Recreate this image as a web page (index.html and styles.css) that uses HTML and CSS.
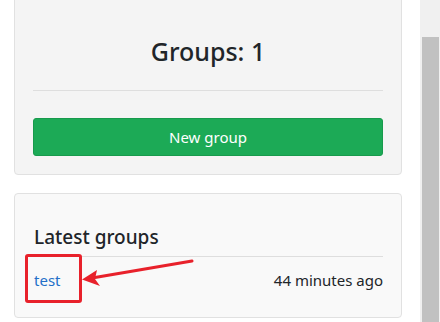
FILE: index.html
```html
<!DOCTYPE html>
<html>
<head>
<meta charset="utf-8">
<link rel="stylesheet" href="styles.css">
</head>
<body>
<div class="page">
  <main class="main">
    <section class="card card-stats">
      <h3 class="stat-title">Groups: 1</h3>
      <hr class="rule">
      <button class="btn-new">New group</button>
    </section>
    <section class="card card-latest">
      <h5 class="latest-title">Latest groups</h5>
      <div class="row">
        <a class="group-link" href="#">test</a>
        <span class="ago">44 minutes ago</span>
      </div>
      <div class="highlight"></div>
      <svg class="arrow" width="120" height="30" viewBox="0 0 120 30">
        <line x1="112" y1="4" x2="12" y2="21" stroke="#e8212b" stroke-width="3" stroke-linecap="round"/>
        <path d="M2 22.5 L17 13 L15 22 L20 29 Z" fill="#e8212b"/>
      </svg>
    </section>
  </main>
  <div class="scrollbar"><div class="thumb"></div></div>
</div>
</body>
</html>
```
FILE: styles.css
```css
* { box-sizing: border-box; }
html, body { margin: 0; padding: 0; background: #fff; }
body {
  font-family: "Noto Sans", "Open Sans", sans-serif;
  color: #212529;
  width: 440px;
  height: 322px;
  overflow: hidden;
}
.page { display: flex; height: 322px; }
.main { width: 420px; padding-left: 14px; }
.scrollbar { width: 20px; background: #f0f0f0; padding: 37px 1px 0 2px; }
.thumb { background: #c1c1c1; height: 300px; }

.card {
  width: 388px;
  border: 1px solid #e1e1e1;
  border-radius: 4px;
  padding: 0 18px;
  position: relative;
}
.card-stats {
  background: #f4f4f4;
  margin-top: -10px;
  padding-top: 47px;
  padding-bottom: 18px;
  height: 185px;
}
.stat-title {
  margin: 0;
  text-align: center;
  font-size: 25px;
  font-weight: 500;
  line-height: 26px;
}
.rule {
  border: 0;
  border-top: 1px solid #dedede;
  margin: 26px 0 0;
}
.btn-new {
  display: block;
  width: 100%;
  height: 38px;
  margin-top: 27px;
  background: #1caa56;
  border: 1px solid #179a4c;
  border-radius: 3px;
  color: #fff;
  font-family: inherit;
  font-size: 15px;
}
.card-latest {
  background: #f9f9f9;
  margin-top: 18px;
  height: 125px;
  padding-top: 31px;
}
.latest-title {
  margin: 0;
  font-size: 19px;
  font-weight: 500;
  line-height: 24px;
  padding-left: 1px;
  padding-bottom: 7px;
  border-bottom: 1px solid #dedede;
}
.row {
  display: flex;
  justify-content: space-between;
  align-items: center;
  height: 46px;
  font-size: 15px;
}
.group-link { color: #2470c8; text-decoration: none; padding-left: 1px; }
.ago { color: #212529; }
.highlight {
  position: absolute;
  left: 10px;
  top: 60px;
  width: 57px;
  height: 49px;
  border: 3px solid #e8212b;
  border-radius: 3px;
}
.arrow {
  position: absolute;
  left: 65px;
  top: 63px;
}
```
